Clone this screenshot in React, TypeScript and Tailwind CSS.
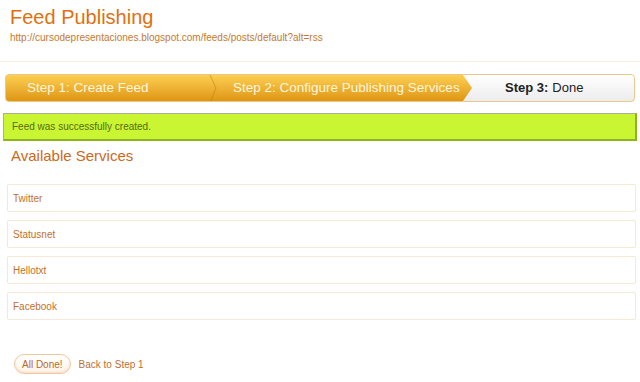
const services = ['Twitter', 'Statusnet', 'Hellotxt', 'Facebook']

export default function App() {
  return (
    <div className="min-h-screen bg-white font-['Liberation_Sans',Arial,sans-serif]">
      {/* header */}
      <div className="px-[10px] pt-[5px] pb-[17px] border-b border-[#fcefe2]">
        <h1 className="text-[20px] leading-[24px] text-[#e0700f]">Feed Publishing</h1>
        <div className="mt-[3px] text-[10px] leading-[12px] text-[#c67a2e]">
          http://cursodepresentaciones.blogspot.com/feeds/posts/default?alt=rss
        </div>
      </div>

      {/* steps */}
      <div className="mx-[5px] mt-[12px] h-[28px] flex rounded-[4px] border border-[#e8c98a] overflow-hidden bg-gradient-to-b from-[#fdcf4f] to-[#de960f] text-[13.5px]">
        <div className="w-[202px] flex items-center pl-[21px] text-[#fff6de]">Step 1: Create Feed</div>
        <svg width="10" height="28" viewBox="0 0 10 28" className="shrink-0">
          <polyline points="2,0 8,13 2,28" fill="none" stroke="#b8780a" strokeOpacity="0.5" strokeWidth="1" />
        </svg>
        <div className="w-[245px] flex items-center pl-[15px] text-[#fff6de] whitespace-nowrap">Step 2: Configure Publishing Services</div>
        <div className="flex-1 flex items-center pl-[42px] text-[13px] text-[#222] bg-gradient-to-b from-white to-[#ececec] [clip-path:polygon(0_0,100%_0,100%_100%,0_100%,9px_50%)]">
          <span className="font-bold">Step 3:</span>
          <span className="ml-[4px]">Done</span>
        </div>
      </div>

      {/* message */}
      <div className="mx-[3px] mt-[11px] h-[28px] flex items-center px-[8px] bg-[#c9f533] border-t border-t-[#a9ad98] border-b-2 border-b-[#8cb51c] border-r-2 border-r-[#8cb51c] border-l border-l-[#a9c05a] text-[10px] text-[#5a6b10]">
        Feed was successfully created.
      </div>

      <h2 className="mt-[5px] px-[11px] text-[15px] leading-[20px] text-[#cc6a1a]">Available Services</h2>

      <div className="mt-[18px] mx-[7px] mr-[4px] flex flex-col gap-[8px]">
        {services.map((s) => (
          <div key={s} className="h-[28px] flex items-center px-[5px] border border-[#f7e8d6] rounded-[2px] text-[10px] text-[#c4702a]">
            {s}
          </div>
        ))}
      </div>

      <div className="mt-[34px] ml-[14px] flex items-center gap-[8px] text-[10px]">
        <button className="h-[20px] px-[7px] rounded-full border border-[#f0c8a0] bg-gradient-to-b from-white to-[#fdf3ea] text-[#b86a2a] shadow-[inset_0_-1px_2px_#f7dcc2]">
          All Done!
        </button>
        <span className="text-[#c07030]">Back to Step 1</span>
      </div>
    </div>
  )
}
